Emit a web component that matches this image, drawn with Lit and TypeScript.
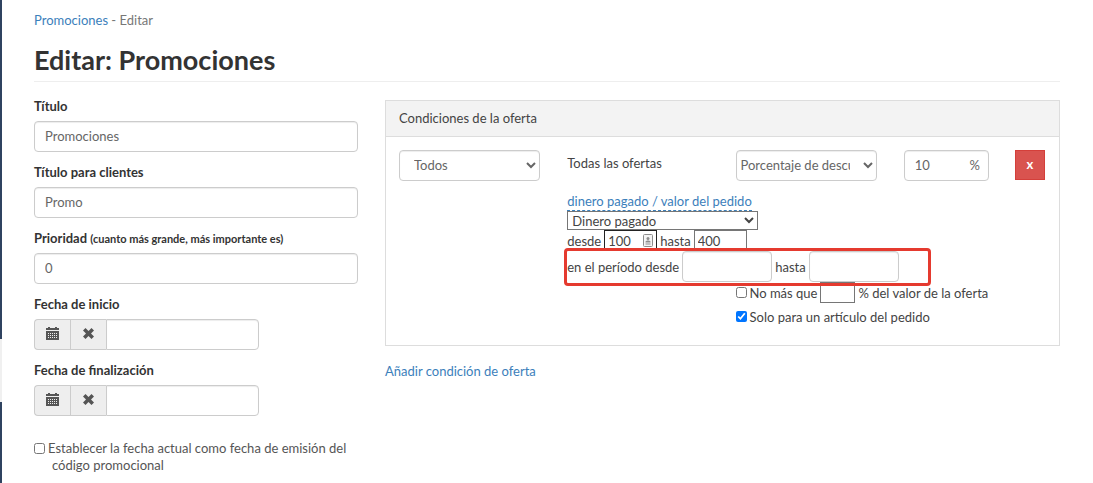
import { LitElement, html, css, svg } from "lit";
import { customElement, state } from "lit/decorators.js";

const calendarIcon = html`<svg class="icon" viewBox="0 0 13 13" aria-hidden="true">
  ${svg`<path fill="currentColor" fill-rule="evenodd" d="M2 1V0h2v1h5V0h2v1h2v2H0V1zM0 4h13v9H0zM2 6v1h1V6zm2 0v1h1V6zm2 0v1h1V6zm2 0v1h1V6zm2 0v1h1V6zM2 8v1h1V8zm2 0v1h1V8zm2 0v1h1V8zm2 0v1h1V8zm2 0v1h1V8zM2 10v1h1v-1zm2 0v1h1v-1zm2 0v1h1v-1zm2 0v1h1v-1zm2 0v1h1v-1z"/>`}
</svg>`;

const removeIcon = html`<svg class="icon" viewBox="0 0 13 13" aria-hidden="true">
  ${svg`<path fill="currentColor" d="M1 3.500 3.500 1l3 3 3-3L12 3.500l-3 3 3 3L9.500 12l-3-3-3 3L1 9.500l3-3z"/>`}
</svg>`;

const contactIcon = html`<svg class="contact" viewBox="0 0 10 13" aria-hidden="true">
  ${svg`<rect x=".5" y=".5" width="9" height="12" rx="1" fill="#f4f4f4" stroke="#8c8c8c"/><circle cx="5" cy="4.500" r="1.500" fill="#8c8c8c"/><path d="M2.500 8.500V7.500L4 6.500h2l1.500 1v1zM2.500 9.500h5v1h-5z" fill="#8c8c8c"/>`}
</svg>`;

@customElement("app-root")
export class AppRoot extends LitElement {
  @state() private dates = [
    { id: "start", label: "Fecha de inicio" },
    { id: "end", label: "Fecha de finalización" },
  ];

  static styles = css`
    :host {
      display: block;
      font: 13px/18px Lato, "Open Sans", sans-serif;
      color: #555;
      background: #fff;
    }
    * {
      box-sizing: border-box;
    }
    input,
    select,
    button {
      font: inherit;
      color: inherit;
      margin: 0;
    }
    a {
      color: #3c80bb;
      text-decoration: none;
    }
    .shell {
      display: flex;
      min-height: 100vh;
    }
    .rail {
      flex: none;
      width: 2px;
      display: flex;
      flex-direction: column;
      background: #2f4360;
    }
    .rail-mark {
      margin-top: 339px;
      height: 63px;
      background: #f0f0f0;
    }
    main {
      flex: 1;
      min-width: 0;
      padding: 11px 33px 0 32px;
    }
    .crumbs {
      color: #777;
    }
    h1 {
      margin: 14px 0 15px;
      padding-bottom: 4px;
      border-bottom: 1px solid #eee;
      font-size: 27px;
      line-height: 34px;
      font-weight: 700;
      color: #333;
    }
    .columns {
      display: grid;
      grid-template-columns: minmax(0, 12fr) minmax(0, 25fr);
      gap: 27px;
      align-items: start;
    }
    .field {
      margin-bottom: 11px;
    }
    .field label {
      display: block;
      margin-bottom: 6px;
      font-weight: 700;
      color: #333;
    }
    small {
      font-size: 11px;
      line-height: 11px;
    }
    .control {
      display: block;
      width: 100%;
      height: 31px;
      padding: 0 10px 2px;
      border: 1px solid #ccc;
      border-radius: 4px;
      background: #fff;
      box-shadow: inset 0 1px 1px rgba(0, 0, 0, 0.075);
      color: #666;
    }
    .group {
      display: flex;
      width: 225px;
    }
    .group button {
      flex: none;
      width: 36px;
      height: 31px;
      padding: 0 0 2px;
      display: grid;
      place-items: center;
      border: 1px solid #ccc;
      border-right-width: 0;
      background: #eee;
      color: #555;
    }
    .group button:first-child {
      border-radius: 4px 0 0 4px;
    }
    .group .control {
      flex: 1;
      min-width: 0;
      border-radius: 0 4px 4px 0;
    }
    .icon {
      width: 13px;
      height: 13px;
    }
    .check {
      display: flex;
      align-items: flex-start;
      gap: 3px;
      white-space: nowrap;
    }
    .check input[type="checkbox"] {
      flex: none;
      width: 11px;
      height: 11px;
      margin-top: 3px;
    }
    .issue {
      margin-top: 24px;
      line-height: 17px;
      white-space: normal;
    }
    .issue label {
      padding-left: 4px;
      text-indent: -4px;
    }
    .panel {
      margin-top: 3px;
      border: 1px solid #ddd;
    }
    .panel h2 {
      margin: 0;
      padding: 8px 13px 9px;
      background: #f3f3f3;
      border-bottom: 1px solid #ddd;
      font-size: 13px;
      font-weight: 400;
      color: #444;
    }
    .panel-body {
      display: grid;
      grid-template-columns: repeat(12, minmax(0, 1fr));
      column-gap: 27px;
      row-gap: 12px;
      padding: 13px 14px 18px 13px;
      color: #444;
    }
    .span3 {
      grid-column: span 3;
    }
    .span2 {
      grid-column: span 2;
    }
    .name {
      padding-top: 4px;
    }
    .kind {
      padding-left: 0;
    }
    .amount {
      display: flex;
      align-items: center;
      padding-right: 8px;
    }
    .amount input {
      flex: 1;
      min-width: 0;
      padding: 0;
      border: 0;
      background: none;
    }
    .remove {
      justify-self: end;
      width: 30px;
      height: 30px;
      padding: 0 0 2px;
      border: 1px solid #d43f3a;
      background: #d9534f;
      color: #fff;
      font-weight: 700;
    }
    .details {
      grid-column: 4 / -1;
    }
    .toggle {
      display: block;
      width: max-content;
      line-height: 17px;
      border-bottom: 1px dashed #3c80bb;
    }
    .plain {
      display: block;
      width: 191px;
      height: 19px;
      padding: 0;
      border: 1px solid #767676;
      border-radius: 0;
      background: #fff;
      color: #444;
    }
    .line {
      display: flex;
      align-items: center;
      gap: 3px;
      width: max-content;
      height: 21px;
    }
    .box {
      display: flex;
      align-items: center;
      width: 53px;
      height: 21px;
      padding: 0 3px;
      border: 1px solid #767676;
      background: #fff;
    }
    .box input {
      width: 100%;
      min-width: 0;
      padding: 0;
      border: 0;
      outline: 0;
      background: none;
    }
    .focus {
      border-color: #222;
    }
    .contact {
      flex: none;
      width: 10px;
      height: 13px;
    }
    .period {
      position: relative;
      height: 31px;
    }
    .period::after {
      content: "";
      position: absolute;
      inset: -3px -32px -4px -3px;
      border: 3px solid #e53a2f;
      border-radius: 4px;
      pointer-events: none;
    }
    .period .control {
      width: 90px;
    }
    .limits {
      grid-column: 7 / -1;
      margin-top: -12px;
      display: grid;
      gap: 3px;
    }
    .limits .check {
      height: 21px;
      align-items: center;
    }
    .limits .check input[type="checkbox"] {
      margin: 0;
    }
    .limits .box {
      width: 35px;
    }
    .add {
      display: inline-block;
      margin-top: 16px;
    }
  `;

  render() {
    return html`<div class="shell">
      <div class="rail"><div class="rail-mark"></div></div>
      <main>
        <nav class="crumbs"><a href="#">Promociones</a> - <span>Editar</span></nav>
        <h1>Editar: Promociones</h1>
        <form class="columns">
          <section>
            <div class="field">
              <label for="title">Título</label>
              <input class="control" id="title" value="Promociones" />
            </div>
            <div class="field">
              <label for="client">Título para clientes</label>
              <input class="control" id="client" value="Promo" />
            </div>
            <div class="field">
              <label for="priority">Prioridad <small>(cuanto más grande, más importante es)</small></label>
              <input class="control" id="priority" value="0" />
            </div>
            ${this.dates.map(
              (d) => html`<div class="field">
                <label for=${d.id}>${d.label}</label>
                <div class="group">
                  <button type="button" aria-label="Calendario">${calendarIcon}</button>
                  <button type="button" aria-label="Borrar">${removeIcon}</button>
                  <input class="control" id=${d.id} />
                </div>
              </div>`
            )}
            <div class="check issue">
              <input type="checkbox" id="issue" />
              <label for="issue">Establecer la fecha actual como fecha de emisión del código promocional</label>
            </div>
          </section>
          <section>
            <div class="panel">
              <h2>Condiciones de la oferta</h2>
              <div class="panel-body">
                <select class="control span3" aria-label="Grupo"><option>Todos</option></select>
                <div class="span3 name">Todas las ofertas</div>
                <select class="control span3 kind" aria-label="Tipo"><option>Porcentaje de descuento</option></select>
                <label class="control span2 amount"><input value="10" /><span>%</span></label>
                <button type="button" class="remove">x</button>
                <div class="details">
                  <a class="toggle" href="#">dinero pagado / valor del pedido</a>
                  <select class="plain" aria-label="Valor"><option>Dinero pagado</option></select>
                  <div class="line">
                    <label for="from">desde</label>
                    <span class="box focus"><input id="from" value="100" />${contactIcon}</span>
                    <label for="to">hasta</label>
                    <span class="box"><input id="to" value="400" /></span>
                  </div>
                  <div class="line period">
                    <label for="pfrom">en el período desde</label>
                    <input class="control" id="pfrom" />
                    <label for="pto">hasta</label>
                    <input class="control" id="pto" />
                  </div>
                </div>
                <div class="limits">
                  <div class="check">
                    <input type="checkbox" id="max" />
                    <label for="max">No más que</label>
                    <input class="box" aria-label="Porcentaje máximo" />
                    <span>% del valor de la oferta</span>
                  </div>
                  <div class="check">
                    <input type="checkbox" id="single" checked />
                    <label for="single">Solo para un artículo del pedido</label>
                  </div>
                </div>
              </div>
            </div>
            <a class="add" href="#">Añadir condición de oferta</a>
          </section>
        </form>
      </main>
    </div>`;
  }
}
